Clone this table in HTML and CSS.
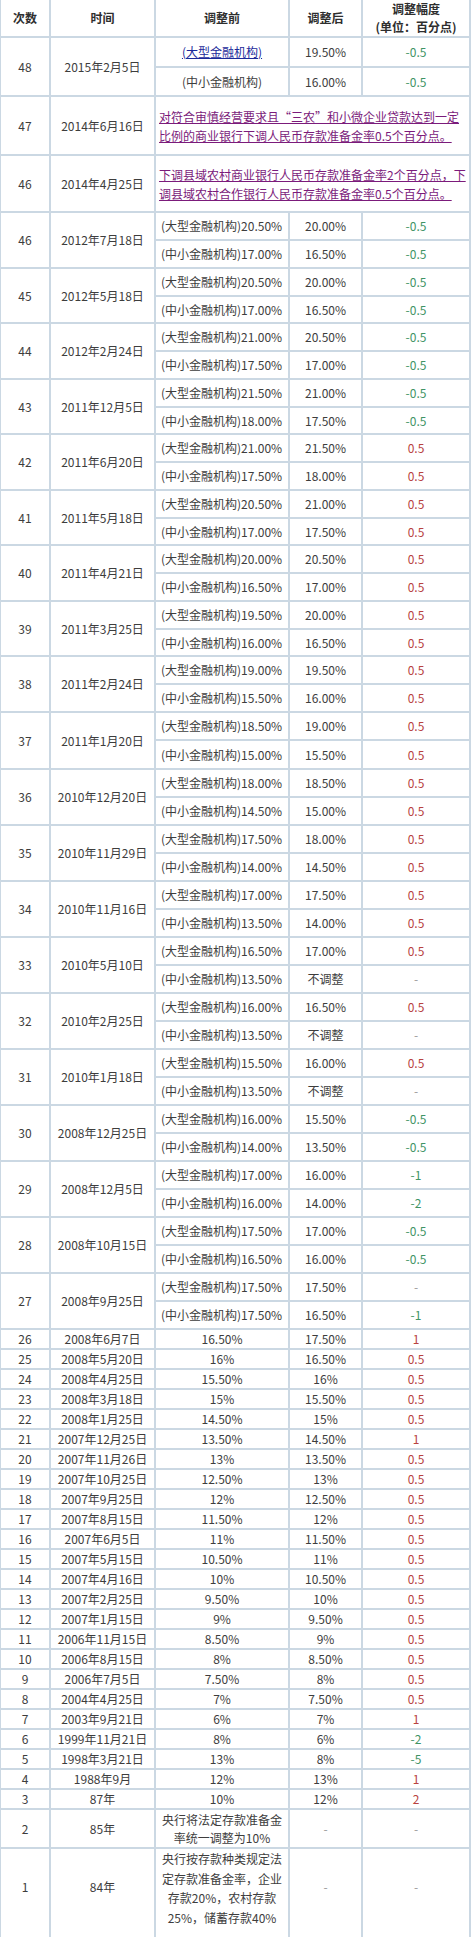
FILE: index.html
```html
<!DOCTYPE html>
<html lang="zh-CN">
<head>
<meta charset="utf-8">
<title>存款准备金率调整</title>
<link rel="stylesheet" href="styles.css">
</head>
<body>
<table class="rates">
<colgroup>
<col class="c1"><col class="c2"><col class="c3"><col class="c4"><col class="c5">
</colgroup>
<thead>
<tr class="hd"><th>次数</th><th>时间</th><th>调整前</th><th>调整后</th><th>调整幅度<br>(单位：百分点)</th></tr>
</thead>
<tbody>
<tr class="h30"><td rowspan="2">48</td><td rowspan="2">2015年2月5日</td><td><a class="lk">(大型金融机构)</a></td><td>19.50%</td><td class="g">-0.5</td></tr>
<tr class="h29"><td>(中小金融机构)</td><td>16.00%</td><td class="g">-0.5</td></tr>
<tr class="h59"><td>47</td><td>2014年6月16日</td><td colspan="3" class="note"><a class="vl">对符合审慎经营要求且“三农”和小微企业贷款达到一定<br>比例的商业银行下调人民币存款准备金率0.5个百分点。</a></td></tr>
<tr class="h57"><td>46</td><td>2014年4月25日</td><td colspan="3" class="note"><a class="vl">下调县域农村商业银行人民币存款准备金率2个百分点，下<br>调县域农村合作银行人民币存款准备金率0.5个百分点。</a></td></tr>

<tr class="sb"><td rowspan="2">46</td><td rowspan="2">2012年7月18日</td><td class="lf">(大型金融机构)20.50%</td><td>20.00%</td><td class="g">-0.5</td></tr>
<tr class="sb"><td class="lf">(中小金融机构)17.00%</td><td>16.50%</td><td class="g">-0.5</td></tr>
<tr class="sb"><td rowspan="2">45</td><td rowspan="2">2012年5月18日</td><td class="lf">(大型金融机构)20.50%</td><td>20.00%</td><td class="g">-0.5</td></tr>
<tr class="sb27"><td class="lf">(中小金融机构)17.00%</td><td>16.50%</td><td class="g">-0.5</td></tr>
<tr class="sb"><td rowspan="2">44</td><td rowspan="2">2012年2月24日</td><td class="lf">(大型金融机构)21.00%</td><td>20.50%</td><td class="g">-0.5</td></tr>
<tr class="sb"><td class="lf">(中小金融机构)17.50%</td><td>17.00%</td><td class="g">-0.5</td></tr>
<tr class="sb"><td rowspan="2">43</td><td rowspan="2">2011年12月5日</td><td class="lf">(大型金融机构)21.50%</td><td>21.00%</td><td class="g">-0.5</td></tr>
<tr class="sb27"><td class="lf">(中小金融机构)18.00%</td><td>17.50%</td><td class="g">-0.5</td></tr>
<tr class="sb"><td rowspan="2">42</td><td rowspan="2">2011年6月20日</td><td class="lf">(大型金融机构)21.00%</td><td>21.50%</td><td class="r">0.5</td></tr>
<tr class="sb"><td class="lf">(中小金融机构)17.50%</td><td>18.00%</td><td class="r">0.5</td></tr>
<tr class="sb"><td rowspan="2">41</td><td rowspan="2">2011年5月18日</td><td class="lf">(大型金融机构)20.50%</td><td>21.00%</td><td class="r">0.5</td></tr>
<tr class="sb27"><td class="lf">(中小金融机构)17.00%</td><td>17.50%</td><td class="r">0.5</td></tr>
<tr class="sb"><td rowspan="2">40</td><td rowspan="2">2011年4月21日</td><td class="lf">(大型金融机构)20.00%</td><td>20.50%</td><td class="r">0.5</td></tr>
<tr class="sb"><td class="lf">(中小金融机构)16.50%</td><td>17.00%</td><td class="r">0.5</td></tr>
<tr class="sb"><td rowspan="2">39</td><td rowspan="2">2011年3月25日</td><td class="lf">(大型金融机构)19.50%</td><td>20.00%</td><td class="r">0.5</td></tr>
<tr class="sb27"><td class="lf">(中小金融机构)16.00%</td><td>16.50%</td><td class="r">0.5</td></tr>
<tr class="sb"><td rowspan="2">38</td><td rowspan="2">2011年2月24日</td><td class="lf">(大型金融机构)19.00%</td><td>19.50%</td><td class="r">0.5</td></tr>
<tr class="sb"><td class="lf">(中小金融机构)15.50%</td><td>16.00%</td><td class="r">0.5</td></tr>
<tr class="sb"><td rowspan="2">37</td><td rowspan="2">2011年1月20日</td><td class="lf">(大型金融机构)18.50%</td><td>19.00%</td><td class="r">0.5</td></tr>
<tr class="sb29"><td class="lf">(中小金融机构)15.00%</td><td>15.50%</td><td class="r">0.5</td></tr>
<tr class="sb"><td rowspan="2">36</td><td rowspan="2">2010年12月20日</td><td class="lf">(大型金融机构)18.00%</td><td>18.50%</td><td class="r">0.5</td></tr>
<tr class="sb"><td class="lf">(中小金融机构)14.50%</td><td>15.00%</td><td class="r">0.5</td></tr>
<tr class="sb"><td rowspan="2">35</td><td rowspan="2">2010年11月29日</td><td class="lf">(大型金融机构)17.50%</td><td>18.00%</td><td class="r">0.5</td></tr>
<tr class="sb"><td class="lf">(中小金融机构)14.00%</td><td>14.50%</td><td class="r">0.5</td></tr>
<tr class="sb"><td rowspan="2">34</td><td rowspan="2">2010年11月16日</td><td class="lf">(大型金融机构)17.00%</td><td>17.50%</td><td class="r">0.5</td></tr>
<tr class="sb"><td class="lf">(中小金融机构)13.50%</td><td>14.00%</td><td class="r">0.5</td></tr>
<tr class="sb"><td rowspan="2">33</td><td rowspan="2">2010年5月10日</td><td class="lf">(大型金融机构)16.50%</td><td>17.00%</td><td class="r">0.5</td></tr>
<tr class="sb"><td class="lf">(中小金融机构)13.50%</td><td>不调整</td><td class="d">-</td></tr>
<tr class="sb"><td rowspan="2">32</td><td rowspan="2">2010年2月25日</td><td class="lf">(大型金融机构)16.00%</td><td>16.50%</td><td class="r">0.5</td></tr>
<tr class="sb"><td class="lf">(中小金融机构)13.50%</td><td>不调整</td><td class="d">-</td></tr>
<tr class="sb"><td rowspan="2">31</td><td rowspan="2">2010年1月18日</td><td class="lf">(大型金融机构)15.50%</td><td>16.00%</td><td class="r">0.5</td></tr>
<tr class="sb"><td class="lf">(中小金融机构)13.50%</td><td>不调整</td><td class="d">-</td></tr>
<tr class="sb"><td rowspan="2">30</td><td rowspan="2">2008年12月25日</td><td class="lf">(大型金融机构)16.00%</td><td>15.50%</td><td class="g">-0.5</td></tr>
<tr class="sb"><td class="lf">(中小金融机构)14.00%</td><td>13.50%</td><td class="g">-0.5</td></tr>
<tr class="sb"><td rowspan="2">29</td><td rowspan="2">2008年12月5日</td><td class="lf">(大型金融机构)17.00%</td><td>16.00%</td><td class="g">-1</td></tr>
<tr class="sb"><td class="lf">(中小金融机构)16.00%</td><td>14.00%</td><td class="g">-2</td></tr>
<tr class="sb"><td rowspan="2">28</td><td rowspan="2">2008年10月15日</td><td class="lf">(大型金融机构)17.50%</td><td>17.00%</td><td class="g">-0.5</td></tr>
<tr class="sb"><td class="lf">(中小金融机构)16.50%</td><td>16.00%</td><td class="g">-0.5</td></tr>
<tr class="sb"><td rowspan="2">27</td><td rowspan="2">2008年9月25日</td><td class="lf">(大型金融机构)17.50%</td><td>17.50%</td><td class="d">-</td></tr>
<tr class="sb"><td class="lf">(中小金融机构)17.50%</td><td>16.50%</td><td class="g">-1</td></tr>

<tr class="one"><td>26</td><td>2008年6月7日</td><td>16.50%</td><td>17.50%</td><td class="r">1</td></tr>
<tr class="one"><td>25</td><td>2008年5月20日</td><td>16%</td><td>16.50%</td><td class="r">0.5</td></tr>
<tr class="one"><td>24</td><td>2008年4月25日</td><td>15.50%</td><td>16%</td><td class="r">0.5</td></tr>
<tr class="one"><td>23</td><td>2008年3月18日</td><td>15%</td><td>15.50%</td><td class="r">0.5</td></tr>
<tr class="one"><td>22</td><td>2008年1月25日</td><td>14.50%</td><td>15%</td><td class="r">0.5</td></tr>
<tr class="one"><td>21</td><td>2007年12月25日</td><td>13.50%</td><td>14.50%</td><td class="r">1</td></tr>
<tr class="one"><td>20</td><td>2007年11月26日</td><td>13%</td><td>13.50%</td><td class="r">0.5</td></tr>
<tr class="one"><td>19</td><td>2007年10月25日</td><td>12.50%</td><td>13%</td><td class="r">0.5</td></tr>
<tr class="one"><td>18</td><td>2007年9月25日</td><td>12%</td><td>12.50%</td><td class="r">0.5</td></tr>
<tr class="one"><td>17</td><td>2007年8月15日</td><td>11.50%</td><td>12%</td><td class="r">0.5</td></tr>
<tr class="one"><td>16</td><td>2007年6月5日</td><td>11%</td><td>11.50%</td><td class="r">0.5</td></tr>
<tr class="one"><td>15</td><td>2007年5月15日</td><td>10.50%</td><td>11%</td><td class="r">0.5</td></tr>
<tr class="one"><td>14</td><td>2007年4月16日</td><td>10%</td><td>10.50%</td><td class="r">0.5</td></tr>
<tr class="one"><td>13</td><td>2007年2月25日</td><td>9.50%</td><td>10%</td><td class="r">0.5</td></tr>
<tr class="one"><td>12</td><td>2007年1月15日</td><td>9%</td><td>9.50%</td><td class="r">0.5</td></tr>
<tr class="one"><td>11</td><td>2006年11月15日</td><td>8.50%</td><td>9%</td><td class="r">0.5</td></tr>
<tr class="one"><td>10</td><td>2006年8月15日</td><td>8%</td><td>8.50%</td><td class="r">0.5</td></tr>
<tr class="one"><td>9</td><td>2006年7月5日</td><td>7.50%</td><td>8%</td><td class="r">0.5</td></tr>
<tr class="one"><td>8</td><td>2004年4月25日</td><td>7%</td><td>7.50%</td><td class="r">0.5</td></tr>
<tr class="one"><td>7</td><td>2003年9月21日</td><td>6%</td><td>7%</td><td class="r">1</td></tr>
<tr class="one"><td>6</td><td>1999年11月21日</td><td>8%</td><td>6%</td><td class="g">-2</td></tr>
<tr class="one"><td>5</td><td>1998年3月21日</td><td>13%</td><td>8%</td><td class="g">-5</td></tr>
<tr class="one"><td>4</td><td>1988年9月</td><td>12%</td><td>13%</td><td class="r">1</td></tr>
<tr class="one"><td>3</td><td>87年</td><td>10%</td><td>12%</td><td class="r">2</td></tr>
<tr class="h39"><td>2</td><td>85年</td><td class="two">央行将法定存款准备金<br>率统一调整为10%</td><td class="d">-</td><td class="d">-</td></tr>
<tr class="last"><td class="top">1</td><td class="top">84年</td><td class="multi">央行按存款种类规定法<br>定存款准备金率，企业<br>存款20%，农村存款<br>25%，储蓄存款40%</td><td class="top d">-</td><td class="top d">-</td></tr>
</tbody>
</table>
</body>
</html>
```
FILE: styles.css
```css
html, body {
  margin: 0;
  padding: 0;
  background: #ffffff;
}

.rates {
  border-collapse: separate;
  border-spacing: 0;
  table-layout: fixed;
  width: 471px;
  border-left: 1px solid #cbd8e3;
  font-family: "Noto Sans CJK SC", "Microsoft YaHei", sans-serif;
  font-size: 12px;
  color: #3d3d3d;
}

.c1 { width: 50px; }
.c2 { width: 105px; }
.c3 { width: 134px; }
.c4 { width: 73px; }
.c5 { width: 108px; }

.rates th,
.rates td {
  padding: 0;
  border-right: 2px solid #cbd8e3;
  border-bottom: 2px solid #cbd8e3;
  text-align: center;
  vertical-align: middle;
  line-height: 18px;
  white-space: nowrap;
}

.rates th {
  font-weight: bold;
  color: #2e2e2e;
}

.hd { height: 38px; }
.h30 { height: 30px; }
.h29 { height: 29px; }
.h59 { height: 59px; }
.h57 { height: 57px; }
.sb { height: 28px; }
.sb27 { height: 27px; }
.sb29 { height: 29px; }
.one { height: 20px; }
.h39 { height: 39px; }
.last { height: 110px; }

.rates td.lf {
  text-align: left;
  padding-left: 5px;
}

.rates td.note {
  text-align: left;
  padding-left: 3px;
  line-height: 19px;
}

.rates td.two {
  line-height: 18px;
}

.rates td.multi {
  vertical-align: top;
  line-height: 19.5px;
}

.rates td.top {
  vertical-align: top;
  padding-top: 29px;
}

.lk {
  color: #1c2a9a;
  text-decoration: underline;
}

.vl {
  color: #7b1b7b;
  text-decoration: underline;
}

.g { color: #3f9465; }
.r { color: #b8423f; }
.d { color: #9a9a9a; }
```
